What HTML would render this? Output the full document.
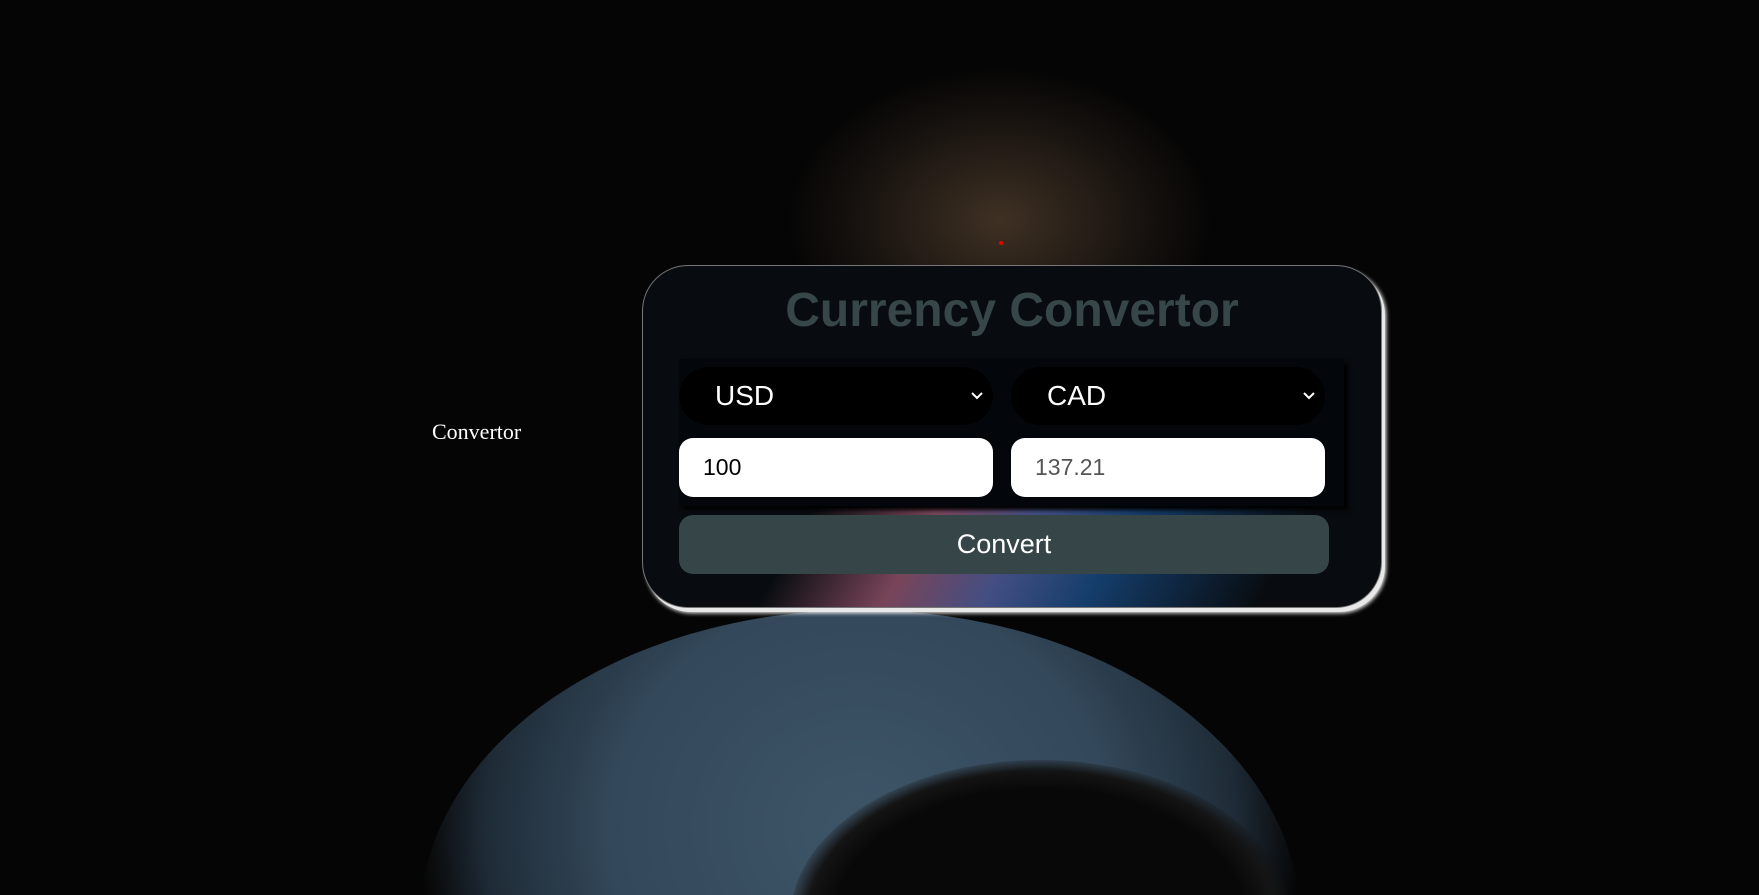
<!DOCTYPE html>
<html><head><style>
html,body{margin:0;padding:0;width:1759px;height:895px;overflow:hidden;background:#050505;font-family:"Liberation Sans",sans-serif}
.bg{position:absolute;left:0;top:0;width:1759px;height:895px;overflow:hidden}
.b{position:absolute;border-radius:50%}
.card{position:absolute;left:642px;top:265px;width:738px;height:341px;border-radius:46px;border:1px solid #777;background:#080c10;box-shadow:3px 4px 0 #e8e8e8,4px 5px 4px #fff;overflow:hidden}
.title{position:absolute;left:0;right:0;top:17px;text-align:center;font-weight:bold;font-size:48px;color:#374649}
.inner{position:absolute;left:36px;top:93px;width:665px;height:147px;background:#03060a;box-shadow:4px 4px 4px #000}
.sel{position:absolute;top:8px;width:314px;height:58px;border-radius:29px;background:#000;color:#fff;font-size:28px;line-height:58px;box-sizing:border-box;padding-left:36px}
.sel svg{position:absolute;right:10px;top:25px}
.inp{position:absolute;top:79px;width:314px;height:59px;border-radius:14px;background:#fff;font-size:23px;line-height:59px;box-sizing:border-box;padding-left:24px;color:#000}
.btn{position:absolute;left:36px;top:249px;width:650px;height:59px;border-radius:14px;background:#364548;color:#fff;font-size:27px;text-align:center;line-height:59px}
</style></head><body>
<div class="bg">
<div class="b" style="left:790px;top:70px;width:420px;height:300px;background:radial-gradient(ellipse at 50% 50%,rgba(110,85,60,.55),rgba(60,45,35,.3) 50%,transparent 72%)"></div>
<div class="b" style="left:420px;top:610px;width:880px;height:620px;background:radial-gradient(ellipse at 50% 35%,#3e5568 0%,#33485a 40%,#1f2c38 60%,transparent 71%)"></div>
<div class="b" style="left:790px;top:760px;width:500px;height:320px;background:radial-gradient(ellipse,#080808 58%,#141414 66%,transparent 72%)"></div>
<div style="position:absolute;left:432px;top:419px;color:#fff;font-family:'Liberation Serif',serif;font-size:22px">Convertor</div>
<div style="position:absolute;left:999px;top:241px;width:4px;height:4px;border-radius:50%;background:#e00"></div>
</div>
<div class="card">
<div style="position:absolute;left:140px;top:240px;width:500px;height:110px;background:linear-gradient(90deg,transparent,#c46a8a 25%,#6a7ad0 45%,#1d5ea8 65%,transparent);opacity:.6;transform:skewX(-30deg)"></div>
<div class="title">Currency Convertor</div>
<div class="inner">
<div class="sel" style="left:0">USD<svg width="12" height="8" viewBox="0 0 12 8"><path d="M1 1l5 5 5-5" stroke="#fff" stroke-width="2" fill="none"/></svg></div>
<div class="sel" style="left:332px">CAD<svg width="12" height="8" viewBox="0 0 12 8"><path d="M1 1l5 5 5-5" stroke="#fff" stroke-width="2" fill="none"/></svg></div>
<div class="inp" style="left:0">100</div>
<div class="inp" style="left:332px;color:#555">137.21</div>
</div>
<div class="btn">Convert</div>
</div>
</body></html>
